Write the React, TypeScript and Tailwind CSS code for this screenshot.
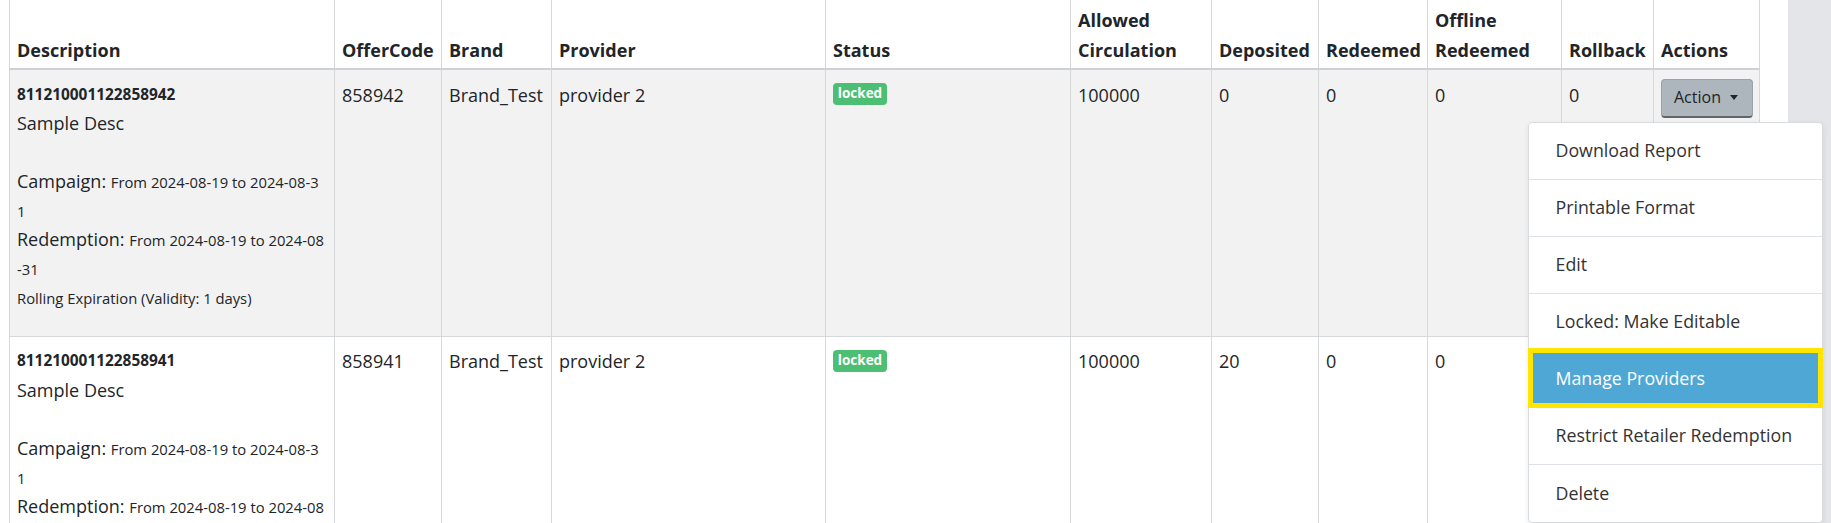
import React from "react";

const colWidths = ["w-[325px]", "w-[107px]", "w-[110px]", "w-[274px]", "w-[245px]", "w-[141px]", "w-[107px]", "w-[109px]", "w-[134px]", "w-[92px]", "w-[106px]"];

const headers = ["Description", "OfferCode", "Brand", "Provider", "Status", "Allowed Circulation", "Deposited", "Redeemed", "Offline Redeemed", "Rollback", "Actions"];

const offers = [
  { id: "811210001122858942", code: "858942", deposited: "0", redeemed: "0", offline: "0", rollback: "0", striped: true },
  { id: "811210001122858941", code: "858941", deposited: "20", redeemed: "0", offline: "0", rollback: "0", striped: false },
];

const menuItems = [
  "Download Report",
  "Printable Format",
  "Edit",
  "Locked: Make Editable",
  "Manage Providers",
  "Restrict Retailer Redemption",
  "Delete",
];

const td = "border border-[#d6d9dc] px-[7px] pt-[10.5px] align-top text-[18px] leading-[28.8px]";

function Description({ id }: { id: string }) {
  return (
    <div className="pb-[23px]">
      <div className="font-bold text-[15.4px]">{id}</div>
      <div>Sample Desc</div>
      <div className="h-[28.8px]" />
      <div className="whitespace-nowrap">
        Campaign: <span className="text-[14.8px]">From 2024-08-19 to 2024-08-3</span>
      </div>
      <div className="text-[14.8px]">1</div>
      <div className="whitespace-nowrap">
        Redemption: <span className="text-[14.8px]">From 2024-08-19 to 2024-08</span>
      </div>
      <div className="text-[14.8px]">-31</div>
      <div className="text-[14.8px] whitespace-nowrap">Rolling Expiration (Validity: 1 days)</div>
    </div>
  );
}

export default function App() {
  return (
    <div className="flex h-[523px] overflow-hidden bg-white text-[#212529] font-['Open_Sans',sans-serif]">
      <div className="relative flex-1">
        <table className="ml-[9px] w-[1751px] table-fixed border-collapse">
          <colgroup>
            {colWidths.map((w, i) => (
              <col key={i} className={w} />
            ))}
          </colgroup>
          <thead>
            <tr>
              {headers.map((h) => (
                <th
                  key={h}
                  className="border-x border-b-2 border-x-[#d6d9dc] border-b-[#cdd1d5] px-[7px] pt-[5px] pb-[3px] text-left align-bottom text-[18px] leading-[30px] font-bold"
                >
                  {h}
                </th>
              ))}
            </tr>
          </thead>
          <tbody>
            {offers.map((o) => (
              <tr key={o.id} className={o.striped ? "bg-[#f2f2f2]" : "bg-white"}>
                <td className={td}>
                  <Description id={o.id} />
                </td>
                <td className={td}>{o.code}</td>
                <td className={td}>Brand_Test</td>
                <td className={td}>provider 2</td>
                <td className={td}>
                  <span className="mt-[2.5px] flex h-[22px] w-[54px] items-center justify-center rounded-[4px] bg-[#4cbf74] text-[13.5px] font-bold leading-none text-white">
                    locked
                  </span>
                </td>
                <td className={td}>100000</td>
                <td className={td}>{o.deposited}</td>
                <td className={td}>{o.redeemed}</td>
                <td className={td}>{o.offline}</td>
                <td className={td}>{o.rollback}</td>
                <td className={td}>
                  <button className="-mt-[2px] flex h-[39px] w-[92px] items-center gap-[9px] rounded-[4px] border border-[#9aa1a8] border-b-2 border-b-[#5f656b] bg-[#adb5bd] pl-[12px] text-[16px] text-[#212529]">
                    Action
                    <span className="h-0 w-0 border-x-[4.5px] border-t-[5px] border-x-transparent border-t-[#212529]" />
                  </button>
                </td>
              </tr>
            ))}
          </tbody>
        </table>

        {/* open action menu */}
        <div className="absolute left-[1527.5px] top-[121.5px] w-[295px] rounded-[4px] border border-[#d9dcdf] bg-white shadow-[0_2px_6px_rgba(0,0,0,0.08)]">
          {menuItems.map((item) =>
            item === "Manage Providers" ? (
              <div
                key={item}
                className="relative flex h-[57px] items-center border-b border-[#dee2e6] bg-[#4fa7d5] pl-[27px] text-[17.8px] text-white"
              >
                {item}
                <div className="absolute -top-[3px] -bottom-px -left-px -right-px border-[5.5px] border-[#ffe500]" />
              </div>
            ) : (
              <div
                key={item}
                className="flex h-[57px] items-center border-b border-[#dee2e6] pl-[27px] text-[17.8px] text-[#333] last:border-b-0"
              >
                {item}
              </div>
            )
          )}
        </div>
      </div>
      <div className="w-[43px] bg-[#e4e5e8]" />
    </div>
  );
}
